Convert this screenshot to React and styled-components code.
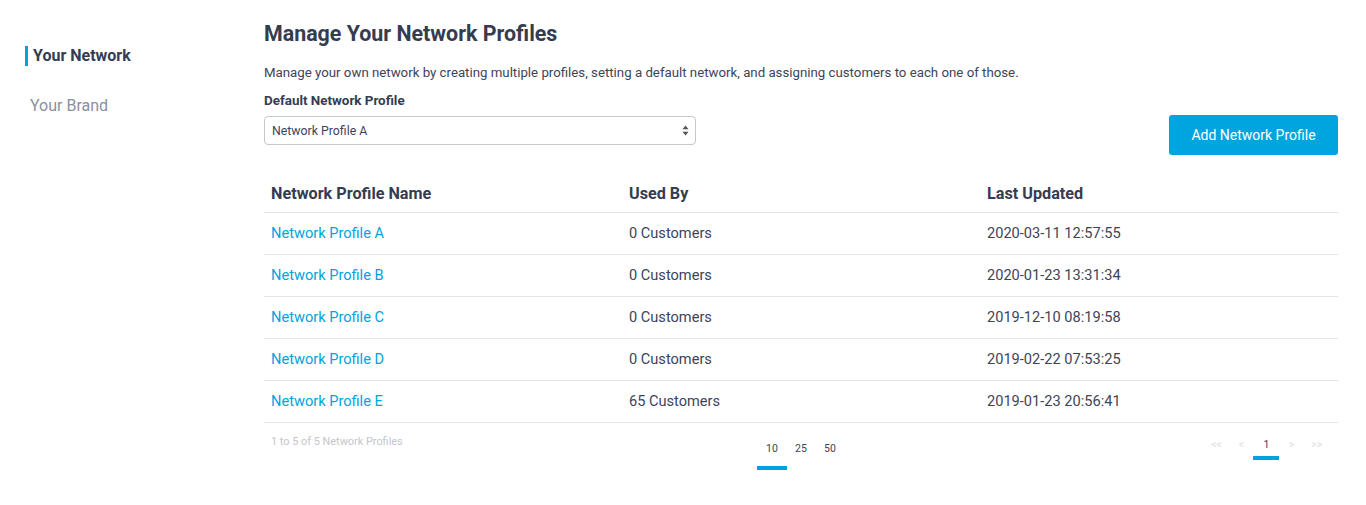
import React from 'react';
import styled, { createGlobalStyle } from 'styled-components';

const profiles = [
  { name: 'Network Profile A', used: '0 Customers', updated: '2020-03-11 12:57:55' },
  { name: 'Network Profile B', used: '0 Customers', updated: '2020-01-23 13:31:34' },
  { name: 'Network Profile C', used: '0 Customers', updated: '2019-12-10 08:19:58' },
  { name: 'Network Profile D', used: '0 Customers', updated: '2019-02-22 07:53:25' },
  { name: 'Network Profile E', used: '65 Customers', updated: '2019-01-23 20:56:41' },
];

const App = () => {
  return (
    <Page>
      <GlobalStyle />
      <Sidebar>
        <NavItem active>Your Network</NavItem>
        <NavItem>Your Brand</NavItem>
      </Sidebar>
      <Main>
        <Title>Manage Your Network Profiles</Title>
        <Description>
          Manage your own network by creating multiple profiles, setting a default network, and assigning customers to each one of those.
        </Description>
        <Label>Default Network Profile</Label>
        <Controls>
          <SelectBox>
            <span>Network Profile A</span>
            <svg width="7" height="11" viewBox="0 0 7 11">
              <path d="M3.5 0.5 L6.5 4.2 H0.5 Z" fill="#555" />
              <path d="M3.5 10.5 L6.5 6.8 H0.5 Z" fill="#555" />
            </svg>
          </SelectBox>
          <AddButton>Add Network Profile</AddButton>
        </Controls>
        <Table>
          <HeadRow>
            <HeadCell>Network Profile Name</HeadCell>
            <HeadCell>Used By</HeadCell>
            <HeadCell>Last Updated</HeadCell>
          </HeadRow>
          {profiles.map((p) => (
            <Row key={p.name}>
              <LinkCell>{p.name}</LinkCell>
              <Cell>{p.used}</Cell>
              <Cell>{p.updated}</Cell>
            </Row>
          ))}
        </Table>
        <Footer>
          <Summary>1 to 5 of 5 Network Profiles</Summary>
          <SizeGroup>
            <PageItem width={29} barOffset={23} active>10</PageItem>
            <PageItem width={29}>25</PageItem>
            <PageItem width={29}>50</PageItem>
          </SizeGroup>
          <Pager>
            <PageItem width={25} muted>&lt;&lt;</PageItem>
            <PageItem width={25} muted>&lt;</PageItem>
            <PageItem width={25} barOffset={17} active>1</PageItem>
            <PageItem width={25} muted>&gt;</PageItem>
            <PageItem width={25} muted>&gt;&gt;</PageItem>
          </Pager>
        </Footer>
      </Main>
    </Page>
  );
};

export default App;

const GlobalStyle = createGlobalStyle`
  body {
    margin: 0;
    background: #ffffff;
    font-family: Roboto, "Liberation Sans", Arial, sans-serif;
    color: #3d4459;
  }
`;

const Page = styled.div`
  display: flex;
  width: 1366px;
  min-height: 505px;
`;

const Sidebar = styled.nav`
  width: 264px;
  flex-shrink: 0;
  padding-top: 46px;
  box-sizing: border-box;
  display: flex;
  flex-direction: column;
  gap: 30px;
`;

const NavItem = styled.div`
  margin-left: ${(p) => (p.active ? '25px' : '22px')};
  padding-left: 5px;
  border-left: 3px solid ${(p) => (p.active ? '#00a3e0' : 'transparent')};
  height: 20px;
  line-height: 20px;
  font-size: 16px;
  font-weight: ${(p) => (p.active ? 700 : 400)};
  color: ${(p) => (p.active ? '#363c50' : '#8b909c')};
`;

const Main = styled.main`
  flex: 1;
  padding: 22px 28px 0 0;
`;

const Title = styled.h1`
  margin: 0;
  font-size: 21.4px;
  line-height: 24px;
  font-weight: 700;
  color: #363c50;
`;

const Description = styled.p`
  margin: 18px 0 0;
  font-size: 13.25px;
  line-height: 18px;
  color: #3d4459;
`;

const Label = styled.div`
  margin-top: 10px;
  font-size: 13.4px;
  line-height: 18px;
  font-weight: 700;
  color: #363c50;
`;

const Controls = styled.div`
  margin-top: 5px;
  display: flex;
  justify-content: space-between;
  align-items: flex-start;
`;

const SelectBox = styled.div`
  margin-top: 1px;
  width: 432px;
  height: 29px;
  box-sizing: border-box;
  border: 1px solid #c4c7cc;
  border-radius: 4px;
  display: flex;
  align-items: center;
  justify-content: space-between;
  padding: 0 6px 0 7px;
  font-size: 12.3px;
  color: #3d4459;
`;

const AddButton = styled.button`
  width: 169px;
  height: 40px;
  border: none;
  border-radius: 3px;
  background: #00a5e0;
  color: #ffffff;
  font-family: Roboto, "Liberation Sans", Arial, sans-serif;
  font-size: 14px;
`;

const Table = styled.div`
  margin-top: 17px;
`;

const Grid = styled.div`
  display: grid;
  grid-template-columns: repeat(3, 1fr);
  border-bottom: 1px solid #e3e5e8;
  box-sizing: border-box;
  align-items: center;
`;

const HeadRow = styled(Grid)`
  height: 41px;
  padding-top: 2px;
`;

const Row = styled(Grid)`
  height: 42px;
  padding-bottom: 1px;
`;

const HeadCell = styled.div`
  padding-left: 7px;
  font-size: 16.2px;
  font-weight: 700;
  color: #363c50;
`;

const Cell = styled.div`
  padding-left: 7px;
  font-size: 14.6px;
  color: #3d4459;
`;

const LinkCell = styled(Cell)`
  color: #00a3e0;
`;

const Footer = styled.div`
  display: grid;
  grid-template-columns: repeat(3, 1fr);
  align-items: start;
`;

const Summary = styled.div`
  padding: 13px 0 0 7px;
  font-size: 10.9px;
  line-height: 12px;
  color: #c4c6cb;
`;

const SizeGroup = styled.div`
  display: flex;
  justify-content: center;
  padding-top: 20px;
`;

const Pager = styled.div`
  display: flex;
  justify-content: flex-end;
  padding: 16px 9px 0 0;
`;

const PageItem = styled.div`
  position: relative;
  width: ${(p) => p.width}px;
  text-align: center;
  font-size: 10.5px;
  line-height: 12px;
  color: ${(p) => (p.muted ? '#dcdee2' : '#3d4459')};
  &::after {
    content: '';
    display: ${(p) => (p.active ? 'block' : 'none')};
    position: absolute;
    left: -1px;
    right: 0;
    top: ${(p) => p.barOffset || 0}px;
    height: 4px;
    background: #00a3e0;
  }
`;
